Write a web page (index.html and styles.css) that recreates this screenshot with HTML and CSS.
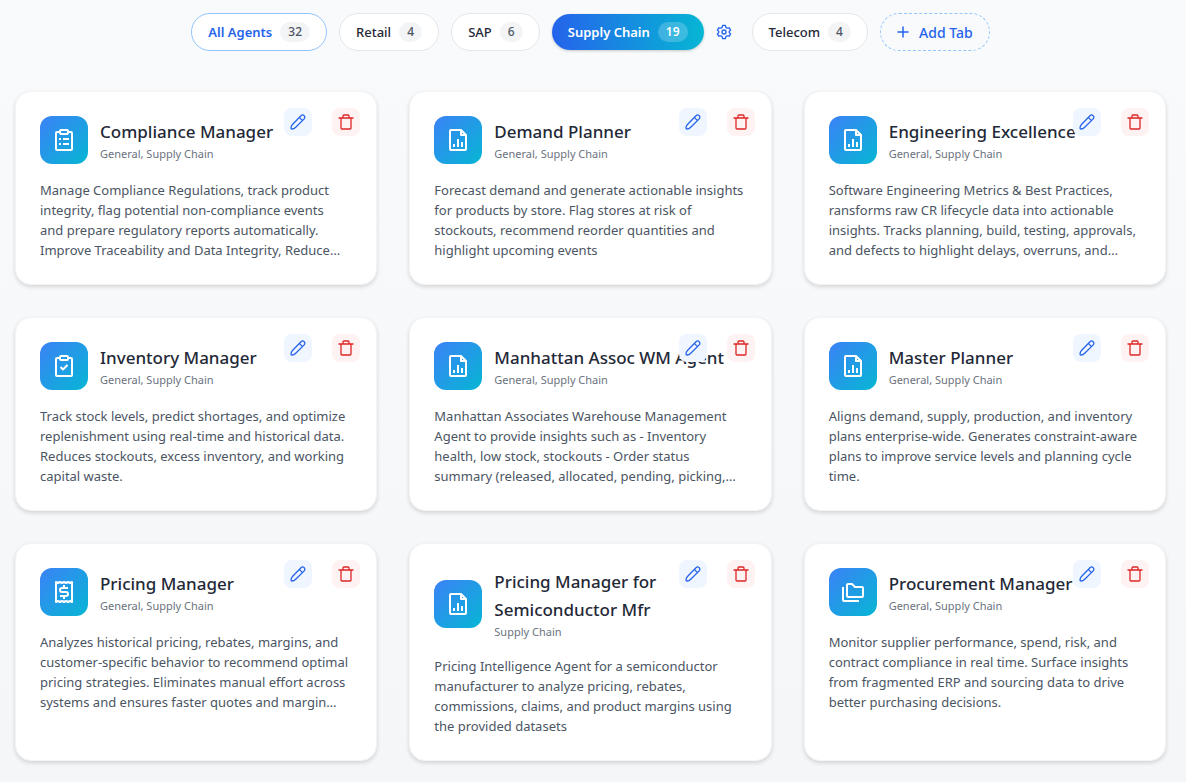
FILE: index.html
```
<!DOCTYPE html>
<html lang="en">
<head>
    <meta charset="UTF-8">
    <meta name="viewport" content="width=device-width, initial-scale=1.0">
    <title>Agents</title>
    <link rel="stylesheet" href="styles.css">
</head>
<body>
    <!-- Shared icons -->
    <svg class="sprite" aria-hidden="true">
        <symbol id="icon-clipboard-list" viewBox="0 0 24 24">
            <path d="M7 4H5a1 1 0 0 0-1 1v16a1 1 0 0 0 1 1h14a1 1 0 0 0 1-1V5a1 1 0 0 0-1-1h-2"/>
            <rect x="8" y="2" width="8" height="4" rx="1"/>
            <path d="M7 11h2M11 11h6M7 16h2M11 16h6"/>
        </symbol>
        <symbol id="icon-clipboard-check" viewBox="0 0 24 24">
            <path d="M7 4H5a1 1 0 0 0-1 1v16a1 1 0 0 0 1 1h14a1 1 0 0 0 1-1V5a1 1 0 0 0-1-1h-2"/>
            <rect x="8" y="2" width="8" height="4" rx="1"/>
            <path d="m8.500 13 2.500 2.500 4.500-4.500"/>
        </symbol>
        <symbol id="icon-file-chart" viewBox="0 0 24 24">
            <path d="M15 2H5a1 1 0 0 0-1 1v18a1 1 0 0 0 1 1h14a1 1 0 0 0 1-1V7z"/>
            <path d="M15 2v5h5M8 16v3M12 11v8M16 14v5"/>
        </symbol>
        <symbol id="icon-receipt" viewBox="0 0 24 24">
            <path d="M4 2v20l2-1 2 1 2-1 2 1 2-1 2 1 2-1 2 1V2l-2 1-2-1-2 1-2-1-2 1-2-1-2 1z"/>
            <path d="M16 8h-6a2 2 0 0 0 0 4h4a2 2 0 0 1 0 4H8M12 5v3M12 16v3"/>
        </symbol>
        <symbol id="icon-folders" viewBox="0 0 24 24">
            <path d="M7 4h4l3 3h7a1 1 0 0 1 1 1v8a1 1 0 0 1-1 1H7a1 1 0 0 1-1-1V5a1 1 0 0 1 1-1z"/>
            <path d="M2 7v13a1 1 0 0 0 1 1h15"/>
        </symbol>
        <symbol id="icon-pencil" viewBox="0 0 16 16">
            <path d="M11 1.700a2.200 2.200 0 0 1 3.200 3.200L5.700 13.300C4.800 14.200 3.200 15 2 15c-.6 0-1-.4-1-1 0-1.200.8-2.800 1.700-3.700zM9.300 3.400l3.200 3.200"/>
        </symbol>
        <symbol id="icon-trash" viewBox="0 0 16 16">
            <path d="M1 4h14M3 4v10a1 1 0 0 0 1 1h8a1 1 0 0 0 1-1V4M5 4V2a1 1 0 0 1 1-1h4a1 1 0 0 1 1 1v2"/>
        </symbol>
        <symbol id="icon-gear" viewBox="0 0 24 24">
            <path d="M9.600 3.900 10 2h4l.4 1.900.6 1.400 1.500.9 1.500.1 1.900-.6 2 3.500-1.400 1.300-.9 1.500 0 0 .9 1.500 1.400 1.300-2 3.500-1.900-.6-1.500.1-1.500.9-.6 1.400L14 22h-4l-.4-1.900-.6-1.400-1.500-.9-1.500-.1-1.900.6-2-3.500 1.400-1.300.9-1.500-.9-1.500-1.400-1.300 2-3.500 1.900.6 1.500-.1 1.500-.9z"/>
            <circle cx="12" cy="12" r="3"/>
        </symbol>
        <symbol id="icon-plus" viewBox="0 0 12 12">
            <path d="M6 1v10M1 6h10"/>
        </symbol>
    </svg>

    <nav class="tabs" aria-label="Agent categories">
        <button type="button" class="tab tab-all">All Agents <span class="count">32</span></button>
        <button type="button" class="tab">Retail <span class="count">4</span></button>
        <button type="button" class="tab">SAP <span class="count">6</span></button>
        <div class="tab-group">
            <button type="button" class="tab tab-active" aria-current="page">Supply Chain <span class="count">19</span></button>
            <button type="button" class="tab-settings" aria-label="Tab settings"><svg><use href="#icon-gear"/></svg></button>
        </div>
        <button type="button" class="tab">Telecom <span class="count">4</span></button>
        <button type="button" class="tab tab-add"><svg><use href="#icon-plus"/></svg>Add Tab</button>
    </nav>

    <main class="grid">
        <article class="card">
            <div class="card-header">
                <div class="card-icon"><svg><use href="#icon-clipboard-list"/></svg></div>
                <div>
                    <h2>Compliance Manager</h2>
                    <p class="category">General, Supply Chain</p>
                </div>
            </div>
            <p class="description">Manage Compliance Regulations, track product<br>integrity, flag potential non-compliance events<br>and prepare regulatory reports automatically.<br>Improve Traceability and Data Integrity, Reduce…</p>
            <div class="actions">
                <button type="button" class="action edit" aria-label="Edit agent"><svg><use href="#icon-pencil"/></svg></button>
                <button type="button" class="action delete" aria-label="Delete agent"><svg><use href="#icon-trash"/></svg></button>
            </div>
        </article>

        <article class="card">
            <div class="card-header">
                <div class="card-icon"><svg><use href="#icon-file-chart"/></svg></div>
                <div>
                    <h2>Demand Planner</h2>
                    <p class="category">General, Supply Chain</p>
                </div>
            </div>
            <p class="description">Forecast demand and generate actionable insights<br>for products by store. Flag stores at risk of<br>stockouts, recommend reorder quantities and<br>highlight upcoming events</p>
            <div class="actions">
                <button type="button" class="action edit" aria-label="Edit agent"><svg><use href="#icon-pencil"/></svg></button>
                <button type="button" class="action delete" aria-label="Delete agent"><svg><use href="#icon-trash"/></svg></button>
            </div>
        </article>

        <article class="card">
            <div class="card-header">
                <div class="card-icon"><svg><use href="#icon-file-chart"/></svg></div>
                <div>
                    <h2>Engineering Excellence</h2>
                    <p class="category">General, Supply Chain</p>
                </div>
            </div>
            <p class="description">Software Engineering Metrics &amp; Best Practices,<br>ransforms raw CR lifecycle data into actionable<br>insights. Tracks planning, build, testing, approvals,<br>and defects to highlight delays, overruns, and…</p>
            <div class="actions">
                <button type="button" class="action edit" aria-label="Edit agent"><svg><use href="#icon-pencil"/></svg></button>
                <button type="button" class="action delete" aria-label="Delete agent"><svg><use href="#icon-trash"/></svg></button>
            </div>
        </article>

        <article class="card">
            <div class="card-header">
                <div class="card-icon"><svg><use href="#icon-clipboard-check"/></svg></div>
                <div>
                    <h2>Inventory Manager</h2>
                    <p class="category">General, Supply Chain</p>
                </div>
            </div>
            <p class="description">Track stock levels, predict shortages, and optimize<br>replenishment using real-time and historical data.<br>Reduces stockouts, excess inventory, and working<br>capital waste.</p>
            <div class="actions">
                <button type="button" class="action edit" aria-label="Edit agent"><svg><use href="#icon-pencil"/></svg></button>
                <button type="button" class="action delete" aria-label="Delete agent"><svg><use href="#icon-trash"/></svg></button>
            </div>
        </article>

        <article class="card">
            <div class="card-header">
                <div class="card-icon"><svg><use href="#icon-file-chart"/></svg></div>
                <div>
                    <h2>Manhattan Assoc WM Agent</h2>
                    <p class="category">General, Supply Chain</p>
                </div>
            </div>
            <p class="description">Manhattan Associates Warehouse Management<br>Agent to provide insights such as - Inventory<br>health, low stock, stockouts - Order status<br>summary (released, allocated, pending, picking,…</p>
            <div class="actions">
                <button type="button" class="action edit" aria-label="Edit agent"><svg><use href="#icon-pencil"/></svg></button>
                <button type="button" class="action delete" aria-label="Delete agent"><svg><use href="#icon-trash"/></svg></button>
            </div>
        </article>

        <article class="card">
            <div class="card-header">
                <div class="card-icon"><svg><use href="#icon-file-chart"/></svg></div>
                <div>
                    <h2>Master Planner</h2>
                    <p class="category">General, Supply Chain</p>
                </div>
            </div>
            <p class="description">Aligns demand, supply, production, and inventory<br>plans enterprise-wide. Generates constraint-aware<br>plans to improve service levels and planning cycle<br>time.</p>
            <div class="actions">
                <button type="button" class="action edit" aria-label="Edit agent"><svg><use href="#icon-pencil"/></svg></button>
                <button type="button" class="action delete" aria-label="Delete agent"><svg><use href="#icon-trash"/></svg></button>
            </div>
        </article>

        <article class="card">
            <div class="card-header">
                <div class="card-icon"><svg><use href="#icon-receipt"/></svg></div>
                <div>
                    <h2>Pricing Manager</h2>
                    <p class="category">General, Supply Chain</p>
                </div>
            </div>
            <p class="description">Analyzes historical pricing, rebates, margins, and<br>customer-specific behavior to recommend optimal<br>pricing strategies. Eliminates manual effort across<br>systems and ensures faster quotes and margin…</p>
            <div class="actions">
                <button type="button" class="action edit" aria-label="Edit agent"><svg><use href="#icon-pencil"/></svg></button>
                <button type="button" class="action delete" aria-label="Delete agent"><svg><use href="#icon-trash"/></svg></button>
            </div>
        </article>

        <article class="card">
            <div class="card-header">
                <div class="card-icon"><svg><use href="#icon-file-chart"/></svg></div>
                <div>
                    <h2>Pricing Manager for<br>Semiconductor Mfr</h2>
                    <p class="category">Supply Chain</p>
                </div>
            </div>
            <p class="description">Pricing Intelligence Agent for a semiconductor<br>manufacturer to analyze pricing, rebates,<br>commissions, claims, and product margins using<br>the provided datasets</p>
            <div class="actions">
                <button type="button" class="action edit" aria-label="Edit agent"><svg><use href="#icon-pencil"/></svg></button>
                <button type="button" class="action delete" aria-label="Delete agent"><svg><use href="#icon-trash"/></svg></button>
            </div>
        </article>

        <article class="card">
            <div class="card-header">
                <div class="card-icon"><svg><use href="#icon-folders"/></svg></div>
                <div>
                    <h2>Procurement Manager</h2>
                    <p class="category">General, Supply Chain</p>
                </div>
            </div>
            <p class="description">Monitor supplier performance, spend, risk, and<br>contract compliance in real time. Surface insights<br>from fragmented ERP and sourcing data to drive<br>better purchasing decisions.</p>
            <div class="actions">
                <button type="button" class="action edit" aria-label="Edit agent"><svg><use href="#icon-pencil"/></svg></button>
                <button type="button" class="action delete" aria-label="Delete agent"><svg><use href="#icon-trash"/></svg></button>
            </div>
        </article>
    </main>
</body>
</html>
```
FILE: styles.css
```
* {
    margin: 0;
    padding: 0;
    box-sizing: border-box;
}

body {
    font-family: 'Segoe UI', 'Noto Sans', 'Open Sans', sans-serif;
    background: linear-gradient(180deg, #f8fafc 0%, #f5f6f8 100%);
    min-height: 100vh;
    padding: 13px 20px 20px 15px;
}

button {
    font-family: inherit;
    cursor: pointer;
}

svg {
    fill: none;
    stroke: currentColor;
    stroke-linecap: round;
    stroke-linejoin: round;
}

.sprite {
    display: none;
}

/* Tabs */
.tabs {
    display: flex;
    flex-wrap: wrap;
    align-items: center;
    justify-content: center;
    gap: 12px;
}

.tab {
    display: flex;
    align-items: center;
    gap: 8px;
    height: 38px;
    padding: 0 16px;
    border: 1px solid #e5e7eb;
    border-radius: 19px;
    background: white;
    color: #1f2937;
    font-size: 13px;
    font-weight: 500;
    white-space: nowrap;
}

.count {
    min-width: 23px;
    padding: 0 8px;
    border-radius: 10px;
    background: #f3f4f6;
    color: #4b5563;
    font-size: 12px;
    line-height: 20px;
}

.tab-all {
    border-color: #93c5fd;
    color: #2563eb;
    font-weight: 600;
}

.tab-all .count {
    font-weight: 500;
}

.tab-group {
    display: flex;
    align-items: center;
    gap: 4px;
}

.tab-active {
    height: 36px;
    border: none;
    background: linear-gradient(90deg, #2563eb, #06b6d4);
    color: white;
    font-weight: 600;
    box-shadow: 0 1px 3px rgba(0, 0, 0, 0.2);
}

.tab-active .count {
    background: rgba(255, 255, 255, 0.2);
    color: white;
}

.tab-settings {
    display: flex;
    padding: 8px;
    border: none;
    background: none;
    color: #2563eb;
}

.tab-settings svg {
    width: 16px;
    height: 16px;
    stroke-width: 2;
}

.tab-add {
    gap: 10px;
    border: 1px dashed #93c5fd;
    background: transparent;
    color: #2563eb;
    font-size: 14px;
}

.tab-add svg {
    width: 12px;
    height: 12px;
    stroke-width: 1.5;
}

/* Agent cards */
.grid {
    display: grid;
    grid-template-columns: repeat(3, 1fr);
    gap: 32px;
    margin-top: 40px;
}

.card {
    position: relative;
    padding: 24px;
    border: 1px solid #f3f4f6;
    border-radius: 16px;
    background: white;
    box-shadow: 0 2px 4px rgba(0, 0, 0, 0.14);
}

.card-header {
    display: flex;
    align-items: center;
    gap: 12px;
    margin-bottom: 16px;
}

.card-icon {
    display: flex;
    align-items: center;
    justify-content: center;
    flex-shrink: 0;
    width: 48px;
    height: 48px;
    border-radius: 12px;
    background: linear-gradient(135deg, #3b82f6, #06b6d4);
    color: white;
}

.card-icon svg {
    width: 24px;
    height: 24px;
    stroke-width: 2;
    stroke-linecap: butt;
}

h2 {
    color: #1f2937;
    font-size: 17px;
    font-weight: 500;
    line-height: 28px;
}

.category {
    color: #6b7280;
    font-size: 11px;
    line-height: 16px;
}

.description {
    color: #4b5563;
    font-size: 13px;
    line-height: 20px;
}

/* Buttons sit over the top right corner of the card */
.actions {
    position: absolute;
    top: 16px;
    right: 16px;
    display: flex;
    gap: 20px;
}

.action {
    display: flex;
    align-items: center;
    justify-content: center;
    width: 28px;
    height: 28px;
    border: none;
    border-radius: 8px;
}

.action svg {
    width: 16px;
    height: 16px;
    stroke-width: 1.3;
}

.edit {
    background: #eff6ff;
    color: #2563eb;
}

.delete {
    background: #fef2f2;
    color: #dc2626;
}
```
